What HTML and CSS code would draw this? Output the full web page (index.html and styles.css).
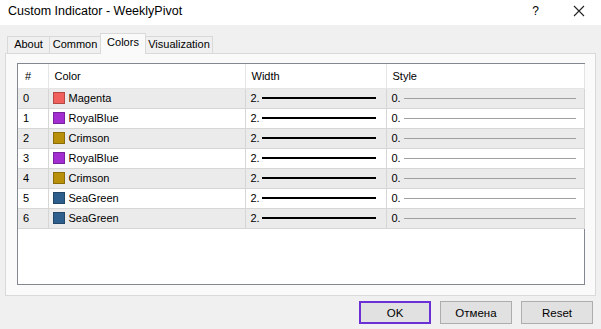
FILE: index.html
```html
<!DOCTYPE html>
<html lang="en">
<head>
  <meta charset="UTF-8">
  <title>Custom Indicator - WeeklyPivot</title>
  <link rel="stylesheet" href="styles.css">
</head>
<body>
  <div class="window">
    <!-- Barra de titulo -->
    <div class="titlebar">
      <span class="title">Custom Indicator - WeeklyPivot</span>
      <span class="help">?</span>
      <svg class="close" width="12" height="12" viewBox="0 0 12 12">
        <path d="M1 1 L11 11 M11 1 L1 11" stroke="#222" stroke-width="1.1" fill="none"/>
      </svg>
    </div>

    <!-- Abas -->
    <div class="tabs">
      <div class="tab t-about">About</div>
      <div class="tab t-common">Common</div>
      <div class="tab t-colors active">Colors</div>
      <div class="tab t-vis">Visualization</div>
    </div>

    <div class="panel">
      <div class="listbox">
        <table class="grid">
          <thead>
            <tr>
              <th class="c-num">#</th>
              <th class="c-color">Color</th>
              <th class="c-width">Width</th>
              <th class="c-style">Style</th>
            </tr>
          </thead>
          <tbody>
            <tr class="alt">
              <td>0</td>
              <td><span class="swatch magenta"></span>Magenta</td>
              <td><div class="val">2.<span class="thick"></span></div></td>
              <td><div class="val">0.<span class="thin"></span></div></td>
            </tr>
            <tr>
              <td>1</td>
              <td><span class="swatch royal"></span>RoyalBlue</td>
              <td><div class="val">2.<span class="thick"></span></div></td>
              <td><div class="val">0.<span class="thin"></span></div></td>
            </tr>
            <tr class="alt">
              <td>2</td>
              <td><span class="swatch crimson"></span>Crimson</td>
              <td><div class="val">2.<span class="thick"></span></div></td>
              <td><div class="val">0.<span class="thin"></span></div></td>
            </tr>
            <tr>
              <td>3</td>
              <td><span class="swatch royal"></span>RoyalBlue</td>
              <td><div class="val">2.<span class="thick"></span></div></td>
              <td><div class="val">0.<span class="thin"></span></div></td>
            </tr>
            <tr class="alt">
              <td>4</td>
              <td><span class="swatch crimson"></span>Crimson</td>
              <td><div class="val">2.<span class="thick"></span></div></td>
              <td><div class="val">0.<span class="thin"></span></div></td>
            </tr>
            <tr>
              <td>5</td>
              <td><span class="swatch seagreen"></span>SeaGreen</td>
              <td><div class="val">2.<span class="thick"></span></div></td>
              <td><div class="val">0.<span class="thin"></span></div></td>
            </tr>
            <tr class="alt">
              <td>6</td>
              <td><span class="swatch seagreen"></span>SeaGreen</td>
              <td><div class="val">2.<span class="thick"></span></div></td>
              <td><div class="val">0.<span class="thin"></span></div></td>
            </tr>
          </tbody>
        </table>
      </div>
    </div>

    <!-- Botoes -->
    <div class="buttons">
      <button class="btn default">OK</button>
      <button class="btn">Отмена</button>
      <button class="btn">Reset</button>
    </div>
  </div>
</body>
</html>
```

FILE: styles.css
```css
* {
  box-sizing: border-box;
}
body {
  margin: 0;
  font-family: "Liberation Sans", Arial, sans-serif;
  font-size: 11px;
  color: #000;
}
.window {
  width: 601px;
  height: 329px;
  background: #f0f0f0;
  display: flex;
  flex-direction: column;
  overflow: hidden;
}
.titlebar {
  height: 25px;
  background: #fff;
  display: flex;
  align-items: center;
  padding-left: 8px;
}
.title {
  flex: 1;
  font-size: 12.5px;
  margin-top: -3px;
}
.help {
  font-size: 12px;
  margin-right: 34px;
  margin-top: -3px;
}
.close {
  margin-right: 16px;
  margin-top: -3px;
}
.tabs {
  display: flex;
  align-items: flex-end;
  margin-top: 8px;
  padding-left: 7px;
  height: 20px;
}
.tab {
  height: 17px;
  line-height: 15px;
  text-align: center;
  border: 1px solid #d9d9d9;
  border-bottom: none;
  background: #f0f0f0;
  margin-right: -1px;
}
.t-about { width: 43px; }
.t-common { width: 52px; }
.t-colors { width: 46px; }
.t-vis { width: 68px; }
.tab.active {
  background: #fafafa;
  height: 21px;
  line-height: 17px;
  position: relative;
  z-index: 1;
  margin-bottom: -1px;
}
.panel {
  margin: 0 5px;
  height: 243px;
  border: 1px solid #d9d9d9;
  background: #fafafa;
  padding: 9px 10px 0 11px;
}
.listbox {
  height: 222px;
  border: 1px solid #828790;
  background: #fff;
}
.grid {
  border-collapse: collapse;
  width: 567px;
  table-layout: fixed;
}
.grid th {
  height: 24px;
  font-weight: normal;
  text-align: left;
  padding: 0 0 0 6px;
  border-right: 1px solid #e5e5e5;
  border-bottom: 1px solid #e5e5e5;
}
.grid th.c-num { width: 30px; padding-left: 7px; }
.grid th.c-color { width: 197px; }
.grid th.c-width { width: 141px; }
.grid td {
  height: 20px;
  padding: 0 0 0 5px;
  border-right: 1px solid #d6d6d6;
  border-bottom: 1px solid #d6d6d6;
  white-space: nowrap;
}
.grid td:nth-child(2) {
  padding-left: 4px;
}
.grid tr.alt td {
  background: #ebebeb;
}
.swatch {
  display: inline-block;
  width: 12px;
  height: 12px;
  border: 1px solid rgba(0, 0, 0, 0.25);
  vertical-align: -2px;
  margin-right: 4px;
}
.magenta { background: #f0605c; }
.royal { background: #a22ed2; }
.crimson { background: #b8900c; }
.seagreen { background: #2e5f8c; }
.val {
  display: flex;
  align-items: center;
}
.thick {
  display: inline-block;
  height: 2px;
  background: #000;
  margin-left: 2px;
  width: 114px;
}
.thin {
  display: inline-block;
  height: 1px;
  background: #a0a0a0;
  margin-left: 3px;
  width: 172px;
}
.buttons {
  display: flex;
  justify-content: flex-end;
  gap: 9px;
  padding: 5px 8px 0 0;
}
.btn {
  width: 72px;
  height: 23px;
  background: #e1e1e1;
  border: 1px solid #adadad;
  font-family: "Liberation Sans", Arial, sans-serif;
  font-size: 11.5px;
  color: #000;
  padding: 0;
}
.btn.default {
  border: 2px solid #6b2fd6;
}
```
